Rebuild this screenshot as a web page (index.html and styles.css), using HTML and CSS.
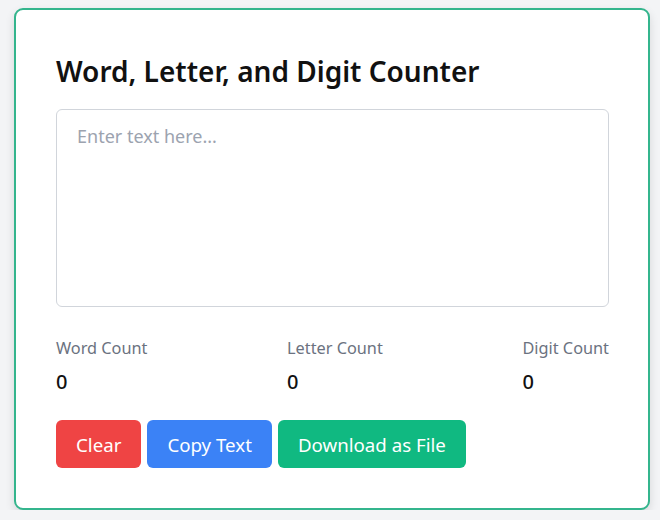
FILE: index.html
```html
<!DOCTYPE html>
<html lang="en">
<head>
<meta charset="utf-8">
<title>Word, Letter, and Digit Counter</title>
<link rel="stylesheet" href="styles.css">
</head>
<body>
<div class="card">
  <h1 class="title">Word, Letter, and Digit Counter</h1>
  <textarea class="input" placeholder="Enter text here..."></textarea>
  <div class="stats">
    <div class="stat">
      <div class="label">Word Count</div>
      <div class="value">0</div>
    </div>
    <div class="stat">
      <div class="label">Letter Count</div>
      <div class="value">0</div>
    </div>
    <div class="stat">
      <div class="label">Digit Count</div>
      <div class="value">0</div>
    </div>
  </div>
  <div class="actions">
    <button class="btn btn-red">Clear</button>
    <button class="btn btn-blue">Copy Text</button>
    <button class="btn btn-green">Download as File</button>
  </div>
</div>
</body>
</html>
```
FILE: styles.css
```css
* { box-sizing: border-box; }
html, body { margin: 0; }
body {
  background: #f3f4f6;
  font-family: "Noto Sans", "Open Sans", sans-serif;
  padding: 8px 0 0 14px;
}
.card {
  width: 636px;
  height: 502px;
  background: #fff;
  border: 2px solid #34b58d;
  border-radius: 9px;
  padding: 40px 39px 40px 40px;
  box-shadow: 0 4px 10px rgba(0,0,0,0.12);
}
.title {
  margin: 3px 0 20px;
  font-size: 28px;
  line-height: 36px;
  font-weight: 600;
  color: #111;
}
.input {
  display: block;
  width: 100%;
  height: 198px;
  border: 1px solid #d1d5db;
  border-radius: 6px;
  padding: 14px 20px;
  font-family: inherit;
  font-size: 18px;
  resize: none;
  outline: none;
}
.input::placeholder { color: #9ca3af; }
.stats {
  display: flex;
  justify-content: space-between;
  margin-top: 29px;
}
.label {
  font-size: 16.3px;
  line-height: 24px;
  color: #6b7280;
}
.value {
  margin-top: 8px;
  font-size: 20px;
  line-height: 28px;
  font-weight: 500;
  color: #111;
}
.actions {
  display: flex;
  gap: 6px;
  margin-top: 24px;
}
.btn {
  height: 48px;
  padding: 0 20px;
  border: none;
  border-radius: 6px;
  color: #fff;
  font-family: inherit;
  font-size: 18.7px;
}
.btn-red { background: #ef4444; }
.btn-blue { background: #3b82f6; }
.btn-green { background: #10b981; }
```
